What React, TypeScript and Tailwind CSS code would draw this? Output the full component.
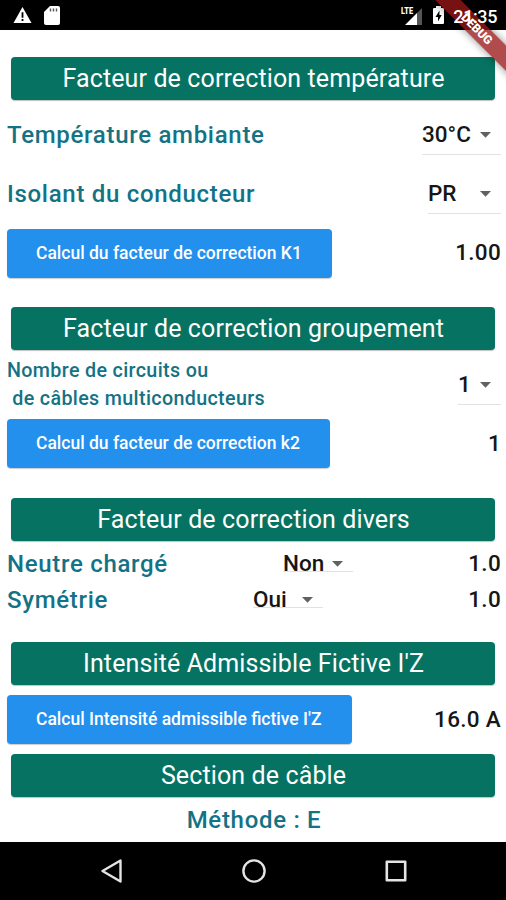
import type { ReactNode } from 'react'

function Header({ children, className }: { children: ReactNode; className: string }) {
  return (
    <h2 className={`mx-[11px] flex h-[43px] shrink-0 items-center justify-center rounded-[4px] bg-[#067362] pl-[1px] text-[25px] tracking-[0.12px] whitespace-nowrap text-white shadow-[0_1px_1px_rgba(0,0,0,0.25)] ${className}`}>
      {children}
    </h2>
  )
}

function Label({ children, className = '' }: { children: ReactNode; className?: string }) {
  return <span className={`text-[24px] font-medium tracking-[0.7px] whitespace-nowrap text-[#147285] ${className}`}>{children}</span>
}

function Value({ children }: { children: ReactNode }) {
  return <span className="text-[22.5px] font-medium tracking-[0.3px] whitespace-nowrap text-[#161616]">{children}</span>
}

function Select({ value, className }: { value: string; className: string }) {
  return (
    <button className={`flex items-center justify-between border-b border-[#e2e2e2] pr-[10px] text-left text-[22.5px] font-medium whitespace-nowrap text-[#161616] ${className}`}>
      {value}
      <svg viewBox="0 0 11 6" className="h-[6px] w-[11px]" fill="#616161">
        <path d="M0 0h11L5.5 5.7z" />
      </svg>
    </button>
  )
}

function Action({ children, className }: { children: ReactNode; className: string }) {
  return (
    <button className={`h-[49px] rounded-[4px] bg-[#2390ee] pl-[29px] text-left text-[17.5px] font-medium whitespace-nowrap text-white shadow-[0_1px_1px_rgba(0,0,0,0.2)] ${className}`}>
      {children}
    </button>
  )
}

function StatusBar() {
  return (
    <div className="flex h-[30px] shrink-0 items-center bg-black pr-[9px] pl-[12px] text-white">
      <svg viewBox="0 0 22 20" className="h-[18px] w-[21px]">
        <path d="M11 1 21 19H1z" fill="#fff" />
        <path d="M11 7v6M11 14.5v2.3" stroke="#000" strokeWidth="2" />
      </svg>
      <svg viewBox="0 0 16 19" className="ml-[11px] h-[19px] w-[16px]">
        <path d="M6 0h8a2 2 0 0 1 2 2v15a2 2 0 0 1-2 2H2a2 2 0 0 1-2-2V6z" fill="#fff" />
        <path d="M6.5 2.5v3M9.5 2.5v3M12.5 2.5v3" stroke="#555" strokeWidth="1.4" />
      </svg>
      <svg viewBox="0 0 22 19" className="ml-auto h-[19px] w-[22px]">
        <path d="M21 2v17H16V7z" fill="#555" />
        <path d="M16 7v12H4z" fill="#fff" />
        <text x="0" y="8" fontSize="9" fontWeight="900" textLength="12" lengthAdjust="spacingAndGlyphs" fill="#fff">LTE</text>
      </svg>
      <svg viewBox="0 0 11 18" className="ml-[10px] h-[18px] w-[11px]">
        <path d="M3 0h5v2h2a1 1 0 0 1 1 1v14a1 1 0 0 1-1 1H1a1 1 0 0 1-1-1V3a1 1 0 0 1 1-1h2z" fill="#fff" />
        <path d="M6.5 4.5 2.5 11H5v4.5L8.7 9H6.4z" fill="#000" />
      </svg>
      <span className="relative z-10 mt-[2px] ml-[9px] text-[18px] font-medium tracking-[-0.4px]">21:35</span>
    </div>
  )
}

function NavBar() {
  return (
    <div className="flex h-[58px] shrink-0 items-center justify-between bg-black pr-[99px] pl-[101px]">
      <svg viewBox="0 0 22 24" className="h-[24px] w-[22px]" fill="none" stroke="#e4e4e4" strokeWidth="2.4" strokeLinejoin="round">
        <path d="M19.5 1.5v21L1.5 12z" />
      </svg>
      <svg viewBox="0 0 24 24" className="h-[24px] w-[24px]" fill="none" stroke="#e4e4e4" strokeWidth="2.4">
        <circle cx="12" cy="12" r="10.6" />
      </svg>
      <svg viewBox="0 0 22 22" className="h-[22px] w-[22px]" fill="none" stroke="#e4e4e4" strokeWidth="2.6" strokeLinejoin="round">
        <path d="M1.8 1.8h18.4v18.4H1.8z" />
      </svg>
    </div>
  )
}

export default function App() {
  return (
    <div className="relative flex h-[900px] w-[506px] flex-col overflow-hidden bg-white font-[Roboto,sans-serif]">
      <StatusBar />
      <main className="flex h-[812px] flex-col">
        <Header className="mt-[27px]">Facteur de correction température</Header>
        <div className="mt-[5px] flex h-[59px] items-center justify-between pr-[5px] pl-[7px]">
          <Label>Température ambiante</Label>
          <Select value="30°C" className="h-[40px] w-[79px] pt-[2px]" />
        </div>
        <div className="flex h-[59px] items-center justify-between pr-[5px] pl-[7px]">
          <Label>Isolant du conducteur</Label>
          <Select value="PR" className="h-[40px] w-[73px] pt-[2px]" />
        </div>
        <div className="mt-[5px] flex h-[50px] items-center justify-between pr-[5px] pl-[7px]">
          <Action className="w-[325px]">Calcul du facteur de correction K1</Action>
          <Value>1.00</Value>
        </div>
        <Header className="mt-[29px]">Facteur de correction groupement</Header>
        <div className="mt-[6px] flex h-[56px] items-center justify-between pr-[5px] pl-[7px]">
          <p className="pt-[2px] text-[19.7px] leading-[28px] font-medium tracking-[0.35px] whitespace-pre text-[#147285]">
            Nombre de circuits ou{'\n'} de câbles multiconducteurs
          </p>
          <Select value="1" className="mt-[1px] h-[40px] w-[43px] pt-[2px]" />
        </div>
        <div className="mt-[7px] flex h-[49px] items-center justify-between pr-[5px] pl-[7px]">
          <Action className="w-[323px]">Calcul du facteur de correction k2</Action>
          <Value>1</Value>
        </div>
        <Header className="mt-[30px]">Facteur de correction divers</Header>
        <div className="mt-[5px] flex h-[36px] items-center justify-between pr-[5px] pl-[7px]">
          <Label className="w-[276px]">Neutre chargé</Label>
          <Select value="Non" className="mr-auto h-[15px] w-[70px]" />
          <Value>1.0</Value>
        </div>
        <div className="flex h-[36px] items-center justify-between pr-[5px] pl-[7px]">
          <Label className="w-[246px]">Symétrie</Label>
          <Select value="Oui" className="mr-auto h-[15px] w-[70px]" />
          <Value>1.0</Value>
        </div>
        <Header className="mt-[24px]">Intensité Admissible Fictive I'Z</Header>
        <div className="mt-[10px] flex h-[49px] items-center justify-between pr-[5px] pl-[7px]">
          <Action className="w-[345px]">Calcul Intensité admissible fictive I'Z</Action>
          <Value>16.0 A</Value>
        </div>
        <Header className="mt-[10px]">Section de câble</Header>
        <div className="flex h-[45px] items-center justify-center">
          <Label className="pt-[1px] pl-[2px]">Méthode : E</Label>
        </div>
      </main>
      <NavBar />
      {/* debug ribbon */}
      <div className="absolute top-[20px] left-[417px] h-[17.5px] w-[120px] rotate-45 bg-black/35 shadow-[0_0_8px_rgba(0,0,0,0.45)]">
        <div className="flex h-full items-center justify-center bg-[#b71c1c]/65 text-[12px] font-black text-white">DEBUG</div>
      </div>
    </div>
  )
}
